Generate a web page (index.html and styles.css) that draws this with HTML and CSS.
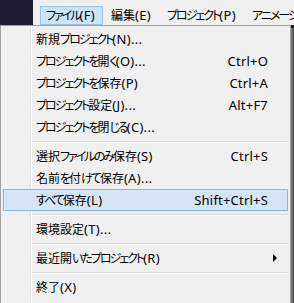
FILE: index.html
```html
<!DOCTYPE html>
<html lang="ja">
<head>
<meta charset="utf-8">
<link rel="stylesheet" href="styles.css">
</head>
<body>
<div class="screen">
  <div class="menubar">
    <div class="bar-left"></div>
    <div class="bar">
      <span class="mb-item active"><span class="k">ファイル</span><span class="lat">(F)</span></span>
      <span class="mb-item">編集<span class="lat">(E)</span></span>
      <span class="mb-item"><span class="k">プロジェクト</span><span class="lat">(P)</span></span>
      <span class="mb-item"><span class="k">アニメーション</span><span class="lat">(A)</span></span>
    </div>
  </div>
  <div class="main">
    <div class="popup">
      <div class="item"><span class="label">新規<span class="k">プロジェクト</span><span class="lat">(N)...</span></span></div>
      <div class="item"><span class="label"><span class="k">プロジェクトを</span>開<span class="k">く</span><span class="lat">(O)...</span></span><span class="key">Ctrl+O</span></div>
      <div class="item"><span class="label"><span class="k">プロジェクトを</span>保存<span class="lat">(P)</span></span><span class="key">Ctrl+A</span></div>
      <div class="item"><span class="label"><span class="k">プロジェクト</span>設定<span class="lat">(J)...</span></span><span class="key">Alt+F7</span></div>
      <div class="item"><span class="label"><span class="k">プロジェクトを</span>閉<span class="k">じる</span><span class="lat">(C)...</span></span></div>
      <div class="sep"></div>
      <div class="item"><span class="label">選択<span class="k">ファイルのみ</span>保存<span class="lat">(S)</span></span><span class="key">Ctrl+S</span></div>
      <div class="item"><span class="label">名前<span class="k">を</span>付<span class="k">けて</span>保存<span class="lat">(A)...</span></span></div>
      <div class="item hover"><span class="label"><span class="k">すべて</span>保存<span class="lat">(L)</span></span><span class="key">Shift+Ctrl+S</span></div>
      <div class="sep"></div>
      <div class="item"><span class="label">環境設定<span class="lat">(T)...</span></span></div>
      <div class="sep"></div>
      <div class="item"><span class="label">最近開<span class="k">いたプロジェクト</span><span class="lat">(R)</span></span><span class="arrow"></span></div>
      <div class="sep"></div>
      <div class="item"><span class="label">終了<span class="lat">(X)</span></span></div>
    </div>
    <div class="shadow"></div>
    <div class="rest"></div>
  </div>
</div>
</body>
</html>
```

FILE: styles.css
```css
html, body {
  margin: 0;
  padding: 0;
  background: #1f1b31;
}
.screen {
  width: 294px;
  height: 303px;
  overflow: hidden;
  font-family: "Noto Sans", "Noto Sans CJK JP", sans-serif;
  font-feature-settings: "palt";
  font-size: 12px;
  color: #000;
  background: #1f1b31;
}
.k {
  letter-spacing: -2px;
}
.lat {
  font-size: 13px;
  letter-spacing: 0.3px;
}
.menubar {
  display: flex;
  height: 25px;
}
.bar-left {
  flex: none;
  width: 33px;
  background: #1f1b31;
}
.bar {
  flex: 1;
  min-width: 0;
  overflow: hidden;
  display: flex;
  align-items: flex-start;
  gap: 2px;
  background: #f0f0f0;
  padding-left: 7px;
  white-space: nowrap;
}
.mb-item {
  flex: none;
  margin-top: 6px;
  height: 17px;
  line-height: 17px;
  padding: 0 7px 0 5px;
  border: 1px solid transparent;
}
.mb-item.active {
  background: #cce4f7;
  border-color: #99c4ec;
}
.main {
  display: flex;
  height: 278px;
}
.popup {
  flex: none;
  width: 287px;
  height: 274px;
  background: #f0f0f0;
  border: 1px solid #a0a0a0;
  padding: 2px 1px;
  background-image: linear-gradient(to right, transparent 29px, #e2e3e3 29px, #e2e3e3 30px, #ffffff 30px, #ffffff 31px, transparent 31px);
}
.item {
  display: flex;
  align-items: center;
  height: 22px;
  margin: 0 1px;
  padding: 0 19px 0 32px;
  border: 1px solid transparent;
  box-sizing: border-box;
  white-space: nowrap;
}
.item.hover {
  background: #d5e5f6;
  border-color: #84b7ea;
}
.label {
  flex: 1;
  line-height: 16px;
}
.key {
  font-size: 13px;
  letter-spacing: 0.2px;
  line-height: 16px;
}
.arrow {
  width: 0;
  height: 0;
  border-left: 4px solid #000;
  border-top: 4px solid transparent;
  border-bottom: 4px solid transparent;
  margin-right: -9px;
}
.sep {
  height: 7px;
  margin-left: 30px;
  margin-right: 1px;
  display: flex;
  flex-direction: column;
  justify-content: center;
}
.sep::before {
  content: "";
  display: block;
  height: 1px;
  background: #d7d7d7;
}
.sep::after {
  content: "";
  display: block;
  height: 1px;
  background: #ffffff;
}
.shadow {
  flex: none;
  width: 3px;
  height: 276px;
  margin-top: 3px;
  background: linear-gradient(to right, #8a8a8a, #3a3a3a);
}
.rest {
  flex: 1;
  background: #262628;
}
```
